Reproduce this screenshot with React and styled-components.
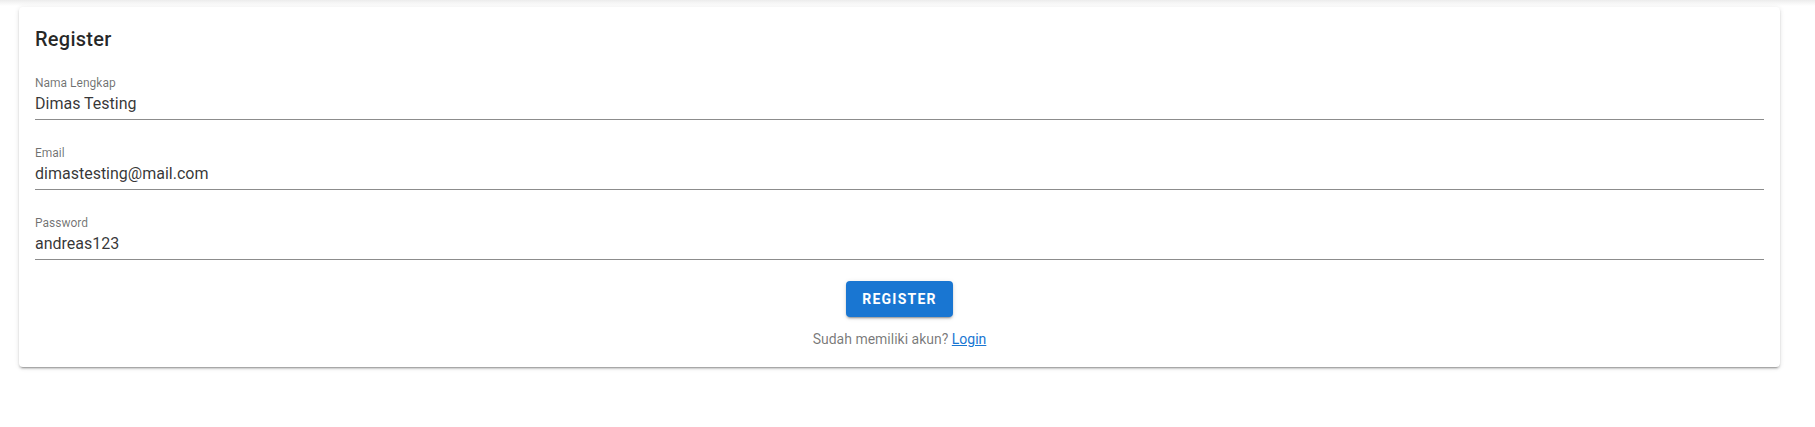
import React from "react";
import styled, { createGlobalStyle } from "styled-components";

const Global = createGlobalStyle`
  html, body { margin: 0; padding: 0; }
  body {
    background: #ffffff linear-gradient(#ececec, #f6f6f6 3px, #ffffff 6px) no-repeat;
    font-family: Roboto, "Liberation Sans", sans-serif;
    -webkit-font-smoothing: antialiased;
  }
`;

const Page = styled.div`
  padding: 7px 35px 12px 19px;
`;

const Card = styled.div`
  background: #fff;
  border-radius: 4px;
  box-shadow: 0 3px 1px -2px rgba(0, 0, 0, 0.2), 0 2px 2px 0 rgba(0, 0, 0, 0.14),
    0 1px 5px 0 rgba(0, 0, 0, 0.12);
`;

const Title = styled.div`
  padding: 16px 16px 0;
  font-size: 20px;
  line-height: 32px;
  font-weight: 500;
  letter-spacing: 0.0125em;
  color: rgba(0, 0, 0, 0.85);
`;

const Form = styled.form`
  display: flex;
  flex-direction: column;
  padding: 20px 16px 18px;
`;

const Field = styled.div`
  display: flex;
  flex-direction: column;
  margin-bottom: ${(p) => (p.$last ? "21px" : "25px")};
`;

const Label = styled.label`
  font-size: 12px;
  line-height: 16px;
  color: rgba(0, 0, 0, 0.56);
  margin-bottom: 2px;
`;

const Input = styled.input`
  border: none;
  border-bottom: 1px solid rgba(0, 0, 0, 0.45);
  outline: none;
  padding: 0 0 6px;
  margin: 0;
  height: 27px;
  box-sizing: border-box;
  font-family: inherit;
  font-size: 16px;
  line-height: 20px;
  color: rgba(0, 0, 0, 0.8);
  background: transparent;
`;

const Actions = styled.div`
  display: flex;
  flex-direction: column;
  align-items: center;
  gap: 12px;
`;

const Button = styled.button`
  height: 36px;
  padding: 0 16px;
  min-width: 64px;
  border: none;
  border-radius: 4px;
  background: #1976d2;
  color: #fff;
  font-family: inherit;
  font-size: 14px;
  font-weight: 700;
  letter-spacing: 0.0892857143em;
  text-transform: uppercase;
  box-shadow: 0 3px 1px -2px rgba(0, 0, 0, 0.2), 0 2px 2px 0 rgba(0, 0, 0, 0.14),
    0 1px 5px 0 rgba(0, 0, 0, 0.12);
  cursor: pointer;
`;

const Note = styled.p`
  margin: 0;
  font-size: 14px;
  line-height: 20px;
  color: rgba(0, 0, 0, 0.54);
`;

const Link = styled.a`
  color: #1976d2;
  text-decoration: underline;
`;

const fields = [
  { id: "name", label: "Nama Lengkap", value: "Dimas Testing", type: "text" },
  { id: "email", label: "Email", value: "dimastesting@mail.com", type: "text" },
  { id: "password", label: "Password", value: "andreas123", type: "text" },
];

export default function App() {
  return (
    <>
      <Global />
      <Page>
        <Card>
          <Title>Register</Title>
          <Form onSubmit={(e) => e.preventDefault()}>
            {fields.map((f, i) => (
              <Field key={f.id} $last={i === fields.length - 1}>
                <Label htmlFor={f.id}>{f.label}</Label>
                <Input id={f.id} type={f.type} defaultValue={f.value} />
              </Field>
            ))}
            <Actions>
              <Button type="submit">Register</Button>
              <Note>
                Sudah memiliki akun? <Link href="#">Login</Link>
              </Note>
            </Actions>
          </Form>
        </Card>
      </Page>
    </>
  );
}
